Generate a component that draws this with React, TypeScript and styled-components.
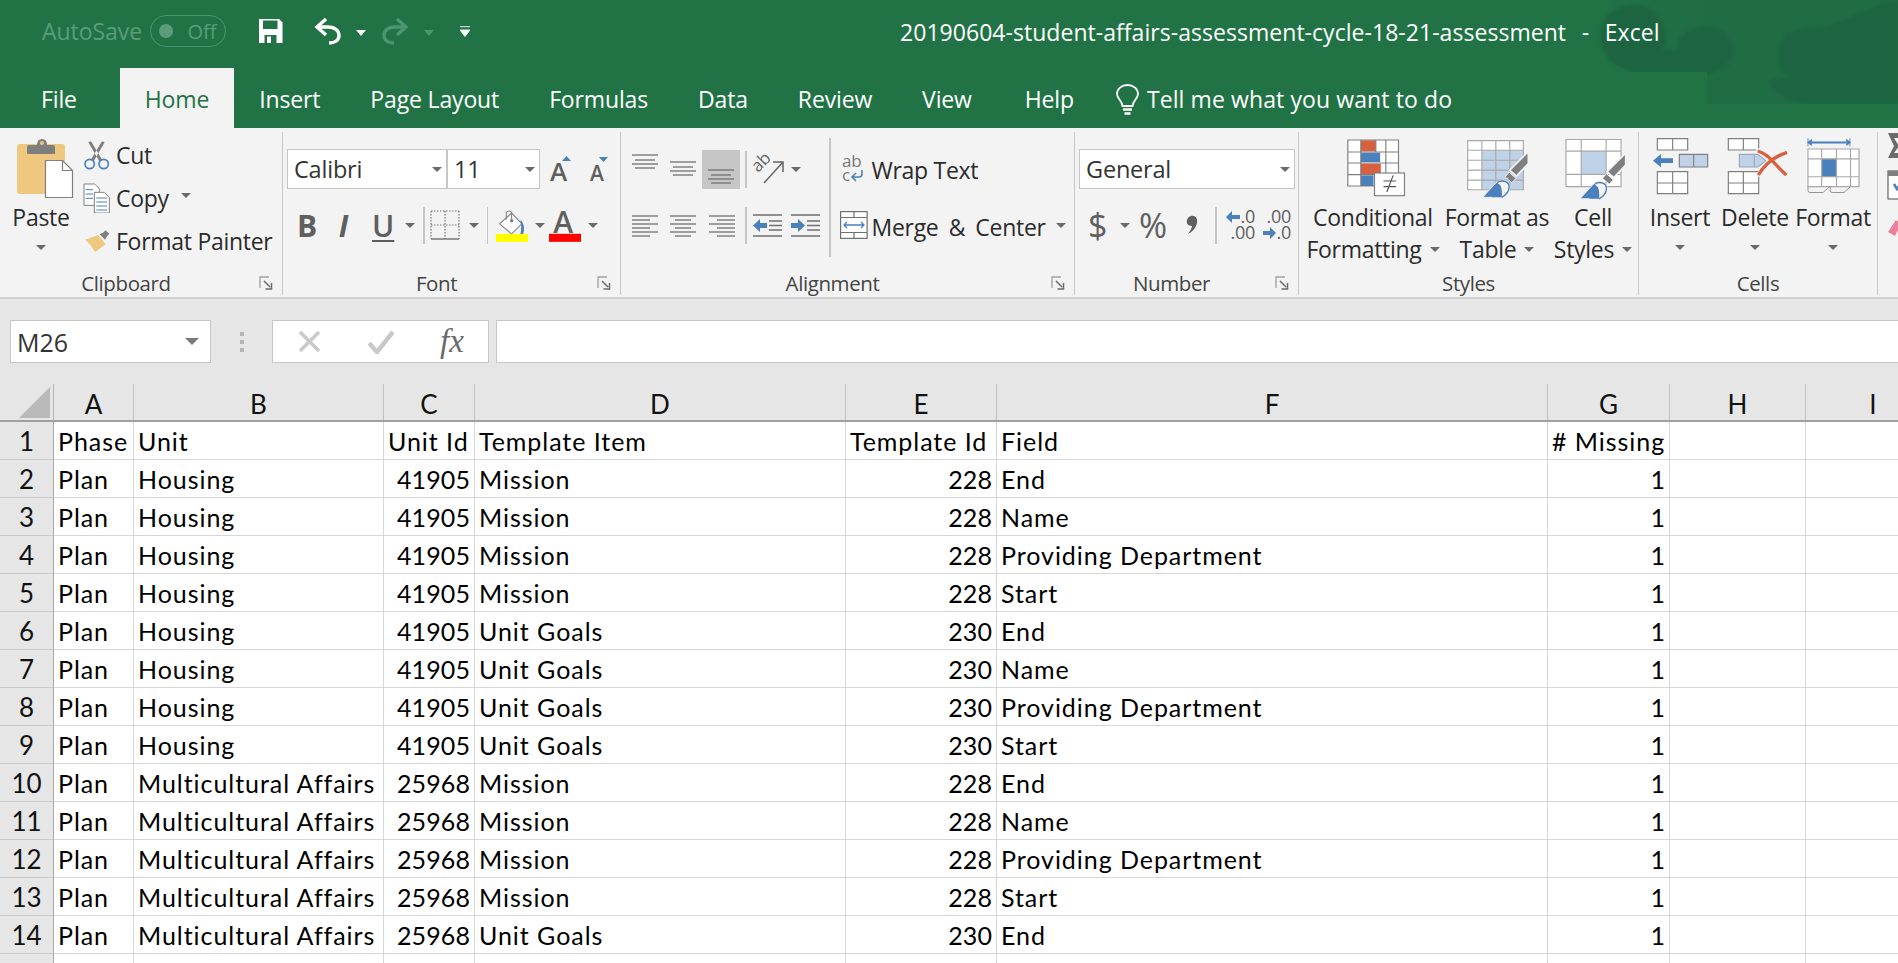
import React from 'react';
import styled, { createGlobalStyle } from 'styled-components';

const UI = `"Open Sans", "Noto Sans", "Liberation Sans", sans-serif`;
const CELL = `Lato, "Liberation Sans", sans-serif`;
const GREEN = '#217346';
const BLUE = '#4a80bc';
const PALE = '#c0d2e8';
const GREY = '#7f7f7f';
const LINE = '#c6c6c6';
const RED = '#d9603f';

const Global = createGlobalStyle`
    html, body { margin: 0; padding: 0; background: #fff; }
    body { font-family: ${UI}; }
`;

const Page = styled.div`
    width: 1898px;
    height: 963px;
    overflow: hidden;
    display: flex;
    flex-direction: column;
`;

/* title + tabs */
const Head = styled.header`
    position: relative;
    background: ${GREEN};
    height: 128px;
    flex: none;
    display: flex;
    flex-direction: column;
`;
const Texture = styled.svg`
    position: absolute;
    right: 0;
    top: 0;
`;
const TitleBar = styled.div`
    position: relative;
    height: 68px;
    display: flex;
    align-items: center;
    padding: 0 0 6px 42px;
    box-sizing: border-box;
`;
const AutoSave = styled.span`
    color: #5a9c7b;
    font-size: 23px;
    letter-spacing: -0.05px;
    width: 108px;
`;
const Toggle = styled.span`
    width: 76px;
    height: 32px;
    box-sizing: border-box;
    border: 1.5px solid #4d9470;
    border-radius: 16px;
    display: flex;
    align-items: center;
    color: #5a9c7b;
    font-size: 20px;
    padding-left: 7.5px;
    &::before {
        content: '';
        width: 14px;
        height: 14px;
        border-radius: 50%;
        background: #5a9c7b;
        margin-right: 15px;
    }
`;
const QatIcon = styled.svg<{ $ml: number }>`
    margin-left: ${p => p.$ml}px;
    flex: none;
`;
const QatCaret = styled.span<{ $ml: number; $dim?: boolean }>`
    margin-left: ${p => p.$ml}px;
    margin-top: 3px;
    border-left: 5px solid transparent;
    border-right: 5px solid transparent;
    border-top: 6px solid ${p => (p.$dim ? '#4d9470' : '#fff')};
`;
const DocTitle = styled.span`
    margin-left: 430px;
    padding-top: 2px;
    color: #fff;
    font-size: 23px;
    letter-spacing: 0.04px;
    word-spacing: 1.8px;
    white-space: pre;
`;
const TabBar = styled.nav`
    position: relative;
    height: 60px;
    display: flex;
    align-items: stretch;
    padding-left: 16px;
    font-size: 23px;
    letter-spacing: -0.15px;
`;
const Tab = styled.span<{ $active?: boolean; $mr?: number }>`
    padding: 2px 25px 0;
    margin-right: ${p => p.$mr ?? 0}px;
    display: flex;
    align-items: center;
    color: ${p => (p.$active ? GREEN : '#fff')};
    background: ${p => (p.$active ? '#f3f3f3' : 'transparent')};
`;
const TellMe = styled.span`
    display: flex;
    align-items: center;
    gap: 8px;
    color: #fff;
    margin-left: 17px;
    padding-top: 2px;
    letter-spacing: 0.1px;
`;

/* ribbon */
const Ribbon = styled.section`
    height: 171px;
    flex: none;
    box-sizing: border-box;
    background: #f3f3f3;
    border-bottom: 2px solid #d2d2d2;
    padding-top: 4px;
    display: flex;
    color: #2b2b2b;
    font-size: 23px;
    letter-spacing: -0.28px;
    overflow: hidden;
`;
const Group = styled.div<{ $w: number; $last?: boolean }>`
    position: relative;
    width: ${p => p.$w}px;
    flex: none;
    height: 163px;
    box-sizing: border-box;
    border-right: ${p => (p.$last ? 'none' : `1.5px solid ${LINE}`)};
    display: flex;
    flex-direction: column;
`;
const GroupBody = styled.div`
    flex: 1;
    display: flex;
    min-height: 0;
`;
const GroupLabel = styled.div<{ $launcher?: boolean }>`
    height: 24px;
    line-height: 24px;
    text-align: center;
    font-size: 20.5px;
    letter-spacing: -0.4px;
    color: #444;
    padding-right: ${p => (p.$launcher ? 30 : 0)}px;
`;
const Launcher = styled.svg`
    position: absolute;
    right: 9px;
    bottom: 5px;
`;
const Caret = styled.span<{ $ml?: number; $mt?: number }>`
    display: inline-block;
    flex: none;
    vertical-align: middle;
    margin-left: ${p => p.$ml ?? 0}px;
    margin-top: ${p => p.$mt ?? 0}px;
    border-left: 5px solid transparent;
    border-right: 5px solid transparent;
    border-top: 5.5px solid #6a6a6a;
`;
const PasteCol = styled.div`
    width: 82px;
    flex: none;
    display: flex;
    flex-direction: column;
    align-items: center;
    padding-top: 5px;
`;
const Big = styled.svg<{ $ml?: number }>`
    flex: none;
    overflow: visible;
    margin-left: ${p => p.$ml ?? 0}px;
`;
const PasteLabel = styled.span`
    height: 32px;
    line-height: 32px;
    margin-top: 2px;
`;
const ClipCol = styled.div`
    padding-top: 1px;
    display: flex;
    flex-direction: column;
`;
const ClipRow = styled.div`
    height: 43px;
    display: flex;
    align-items: center;
    white-space: nowrap;
`;
const ClipIcon = styled.svg`
    width: 30px;
    margin-right: 4px;
    flex: none;
`;
const Stack = styled.div<{ $w?: number }>`
    display: flex;
    flex-direction: column;
    gap: 16px;
    padding-top: 17px;
    ${p => (p.$w ? `width: ${p.$w}px; flex: none;` : '')}
`;
const Row = styled.div<{ $pl?: number }>`
    height: 40px;
    display: flex;
    align-items: center;
    padding-left: ${p => p.$pl ?? 0}px;
    white-space: nowrap;
`;
const Combo = styled.div<{ $w: number; $ml?: number }>`
    width: ${p => p.$w}px;
    height: 40px;
    margin-left: ${p => p.$ml ?? 0}px;
    box-sizing: border-box;
    flex: none;
    background: #fff;
    border: 1.5px solid ${LINE};
    display: flex;
    align-items: center;
    justify-content: space-between;
    padding: 0 4px 0 6px;
    font-size: 23.5px;
    letter-spacing: -0.2px;
    color: #333;
`;
const Glyph = styled.span<{ $w: number; $ml?: number; $size?: number; $weight?: number; $i?: boolean; $u?: boolean }>`
    width: ${p => p.$w}px;
    margin-left: ${p => p.$ml ?? 0}px;
    flex: none;
    text-align: center;
    font-family: ${UI};
    font-size: ${p => p.$size ?? 30}px;
    font-weight: ${p => p.$weight ?? 600};
    font-style: ${p => (p.$i ? 'italic' : 'normal')};
    color: #5f5f5f;
    letter-spacing: 0;
    text-decoration: ${p => (p.$u ? 'underline' : 'none')};
    text-decoration-thickness: 1.5px;
    text-underline-offset: 3px;
`;
const Sep = styled.span<{ $ml: number }>`
    width: 1.5px;
    height: 37px;
    flex: none;
    margin-left: ${p => p.$ml}px;
    background: ${LINE};
`;
const Small = styled.svg<{ $ml?: number }>`
    flex: none;
    overflow: visible;
    margin-left: ${p => p.$ml ?? 0}px;
`;
const Pressed = styled.span<{ $ml: number }>`
    width: 38px;
    height: 39px;
    margin-left: ${p => p.$ml}px;
    flex: none;
    background: #c6c6c6;
    display: flex;
    justify-content: center;
`;
const Divider = styled.span`
    width: 1.5px;
    height: 119px;
    margin-top: 6px;
    flex: none;
    background: ${LINE};
`;
const RowText = styled.span<{ $ml: number; $mt?: number; $ws?: number }>`
    margin-left: ${p => p.$ml}px;
    margin-top: ${p => p.$mt ?? 0}px;
    word-spacing: ${p => p.$ws ?? 0}px;
`;
const LargeRow = styled.div`
    display: flex;
    padding-left: 4px;
`;
const Large = styled.div<{ $w: number }>`
    width: ${p => p.$w}px;
    flex: none;
    display: flex;
    flex-direction: column;
    align-items: center;
    padding-top: 5px;
`;
const IconSlot = styled.div`
    height: 64px;
    display: flex;
    align-items: flex-start;
`;
const LargeText = styled.div`
    height: 32px;
    line-height: 32px;
    white-space: nowrap;
`;

/* formula band */
const Band = styled.section`
    height: 85px;
    flex: none;
    background: #e6e6e6;
    display: flex;
    padding: 21px 0 21px 10px;
    box-sizing: border-box;
`;
const NameBox = styled.div`
    width: 201px;
    box-sizing: border-box;
    background: #fff;
    border: 1.5px solid ${LINE};
    display: flex;
    align-items: center;
    justify-content: space-between;
    padding: 0 11px 0 6px;
    font-size: 25px;
    color: #333;
`;
const BandCaret = styled.span`
    border-left: 7px solid transparent;
    border-right: 7px solid transparent;
    border-top: 7px solid #7a7a7a;
`;
const Grip = styled.span`
    width: 61px;
    flex: none;
    display: flex;
    align-items: center;
    justify-content: center;
    &::before {
        content: '';
        width: 4px;
        height: 20px;
        background: repeating-linear-gradient(#b5b5b5 0 4px, transparent 4px 8px);
    }
`;
const FxBox = styled.div`
    width: 217px;
    box-sizing: border-box;
    background: #fff;
    border: 1.5px solid ${LINE};
    display: flex;
    align-items: center;
    padding-left: 25px;
`;
const CheckIcon = styled.svg`
    margin-left: 47px;
`;
const FxMark = styled.span`
    margin-left: 46px;
    font-family: "Liberation Serif", serif;
    font-style: italic;
    font-size: 33px;
    color: #6a6a6a;
`;
const FormulaInput = styled.div`
    flex: 1;
    margin-left: 7px;
    background: #fff;
    border: 1.5px solid ${LINE};
    border-right: none;
`;

/* sheet */
const COLUMNS = '54px 80px 250px 91px 371px 151px 551px 122px 136px 135px';
const HeaderRow = styled.div`
    display: grid;
    grid-template-columns: ${COLUMNS};
    height: 38px;
    flex: none;
    box-sizing: border-box;
    background: #e6e6e6;
    border-bottom: 2px solid #a0a0a0;
`;
const Corner = styled.div`
    border-right: 1.5px solid #b5b5b5;
    display: flex;
    align-items: center;
    justify-content: flex-end;
    padding-right: 3px;
`;
const ColHead = styled.div`
    border-right: 1.5px solid #c0c0c0;
    text-align: center;
    font-family: ${CELL};
    font-size: 26px;
    line-height: 41px;
    overflow: hidden;
    color: #111;
`;
const SheetRow = styled.div`
    display: grid;
    grid-template-columns: ${COLUMNS};
    height: 38px;
    flex: none;
    box-sizing: border-box;
`;
const RowHead = styled.div`
    background: #e6e6e6;
    border-right: 1.5px solid #a8a8a8;
    border-bottom: 1.5px solid #c8c8c8;
    text-align: center;
    font-family: ${CELL};
    font-size: 26px;
    line-height: 38px;
    overflow: hidden;
    color: #111;
`;
const Cell = styled.div<{ $num?: boolean }>`
    border-right: 1.5px solid #d6d6d6;
    border-bottom: 1.5px solid #d6d6d6;
    padding: 0 4px;
    overflow: hidden;
    white-space: nowrap;
    text-align: ${p => (p.$num ? 'right' : 'left')};
    font-family: ${CELL};
    font-size: 25px;
    letter-spacing: ${p => (p.$num ? 0.1 : 0.95)}px;
    line-height: 38.5px;
    color: #000;
`;

type Rec = [string, string, string, string];
const HOUSING = 'Housing';
const MULTI = 'Multicultural Affairs';
const rows: Rec[] = [
    [HOUSING, '41905', 'Mission', '228|End'],
    [HOUSING, '41905', 'Mission', '228|Name'],
    [HOUSING, '41905', 'Mission', '228|Providing Department'],
    [HOUSING, '41905', 'Mission', '228|Start'],
    [HOUSING, '41905', 'Unit Goals', '230|End'],
    [HOUSING, '41905', 'Unit Goals', '230|Name'],
    [HOUSING, '41905', 'Unit Goals', '230|Providing Department'],
    [HOUSING, '41905', 'Unit Goals', '230|Start'],
    [MULTI, '25968', 'Mission', '228|End'],
    [MULTI, '25968', 'Mission', '228|Name'],
    [MULTI, '25968', 'Mission', '228|Providing Department'],
    [MULTI, '25968', 'Mission', '228|Start'],
    [MULTI, '25968', 'Unit Goals', '230|End'],
];

const LauncherIcon = () => (
    <Launcher width="14" height="14" viewBox="0 0 14 14" fill="none">
        <path d="M10 1H1v11" stroke="#a0a0a0" strokeWidth="1.3" />
        <path d="M5 5l6 6M12.5 7v6h-6" stroke="#6a6a6a" strokeWidth="1.5" />
    </Launcher>
);

const Lines = ({ w, h, ml, ys }: { w: number; h: number; ml?: number; ys: [number, number, number][] }) => (
    <Small $ml={ml} width={w} height={h} viewBox={`0 0 ${w} ${h}`}>
        {ys.map(([a, b, y]) => (
            <line key={`${a}-${y}`} x1={a} x2={b} y1={y} y2={y} stroke="#707070" strokeWidth="1.3" />
        ))}
    </Small>
);

const Brush = ({ dx = 0, dy = 0 }: { dx?: number; dy?: number }) => (
    <g transform={`translate(${dx} ${dy})`}>
        <path d="M568 66v36l-36 38-20-18z" fill={GREY} stroke="#f3f3f3" strokeWidth="5" />
        <path d="M510 128l21 19-13 13-20-18z" fill={GREY} stroke="#f3f3f3" strokeWidth="3" />
        <path d="M430 204l40-44c14-12 38-10 42 8 2 14-6 28-22 36z" fill={BLUE} stroke="#f3f3f3" strokeWidth="3" />
        <path d="M476 158c16-8 34 0 34 14 0 12-8 24-22 32" fill="#f3f3f3" stroke={BLUE} strokeWidth="4" />
        <path d="M470 164c12-4 20 6 18 40h-30z" fill={BLUE} />
    </g>
);

const Cols = ['A', 'B', 'C', 'D', 'E', 'F', 'G', 'H', 'I'];

export default function App() {
    return (
        <Page>
            <Global />
            <Head>
                <Texture width="398" height="104" viewBox="0 0 398 104">
                    <defs>
                        <linearGradient id="fade" x1="90" x2="220" y1="0" y2="0" gradientUnits="userSpaceOnUse">
                            <stop offset="0" stopColor={GREEN} />
                            <stop offset="1" stopColor="#206c43" />
                        </linearGradient>
                        <clipPath id="zone">
                            <path d="M90 0h308v104H207V72H90z" />
                        </clipPath>
                        <filter id="soft">
                            <feGaussianBlur stdDeviation="1.5" />
                        </filter>
                    </defs>
                    <path d="M90 0h308v104H207V72H90z" fill="url(#fade)" />
                    <g clipPath="url(#zone)" filter="url(#soft)" fill="#1f6540">
                        <circle cx="133" cy="37" r="33" />
                        <ellipse cx="205" cy="50" rx="28" ry="24" />
                        <path d="M130 50h70v28h-70z" />
                        <path d="M278 60c-2-26 18-34 42-32 24-6 54-24 78-28v104h-90c-20-2-38-14-40-24 8-4 20 0 24-2-8-4-14-10-14-18z" />
                    </g>
                </Texture>
                <TitleBar>
                    <AutoSave>AutoSave</AutoSave>
                    <Toggle>Off</Toggle>
                    <QatIcon $ml={32} width="25" height="26" viewBox="0 0 25 26">
                        <path d="M1 1h20l3.5 3.5V25H1z" fill="#fff" />
                        <path d="M5 2.5h14.5V11H5zM6.5 17h12v8h-12z" fill={GREEN} />
                        <path d="M9 18.5h4V25H9z" fill="#fff" />
                    </QatIcon>
                    <QatIcon $ml={31} width="27" height="28" viewBox="0 0 27 28" fill="none" stroke="#fff" strokeWidth="3.4">
                        <path d="M12 2L3 10l9 8" />
                        <path d="M4 10h10c7 0 11 4 11 8.500S21 26 15 26" />
                    </QatIcon>
                    <QatCaret $ml={15} />
                    <QatIcon $ml={16} width="27" height="28" viewBox="0 0 27 28" fill="none" stroke="#4d9470" strokeWidth="3.4">
                        <path d="M15 2l9 8-9 8" />
                        <path d="M23 10H13C6 10 2 14 2 18.500S6 26 12 26" />
                    </QatIcon>
                    <QatCaret $ml={15} $dim />
                    <QatIcon $ml={26} width="10" height="11" viewBox="0 0 10 11">
                        <path d="M0 .7h10M0 4h10L5 10.500z" fill="#fff" stroke="#fff" strokeWidth=".9" />
                    </QatIcon>
                    <DocTitle>20190604-student-affairs-assessment-cycle-18-21-assessment  -  Excel</DocTitle>
                </TitleBar>
                <TabBar>
                    <Tab $mr={18}>File</Tab>
                    <Tab $active>Home</Tab>
                    <Tab>Insert</Tab>
                    <Tab>Page Layout</Tab>
                    <Tab>Formulas</Tab>
                    <Tab>Data</Tab>
                    <Tab>Review</Tab>
                    <Tab $mr={3}>View</Tab>
                    <Tab>Help</Tab>
                    <TellMe>
                        <svg width="23" height="31" viewBox="0 0 23 31" fill="none" stroke="#fff" strokeWidth="1.8">
                            <path d="M6.500 22c0-5-5.500-7-5.500-12C1 5 5.500 1 11.500 1S22 5 22 10c0 5-5.500 7-5.500 12z" />
                            <path d="M7 25.500h9M8.500 29.500h6" strokeWidth="2.400" />
                        </svg>
                        Tell me what you want to do
                    </TellMe>
                </TabBar>
            </Head>

            <Ribbon>
                <Group $w={283}>
                    <GroupBody>
                        <PasteCol>
                            <Big $ml={8} width="60" height="62" viewBox="0 0 60 62">
                                <rect x="2" y="7" width="48" height="50" rx="3" fill="#edc87e" />
                                <path d="M12 17v-7q0-2 2-2h8q0-6 5-6t5 6h6q2 0 2 2v7z" fill={GREY} />
                                <circle cx="27" cy="6" r="2" fill="#edc87e" />
                                <path d="M30.500 23.500h17l10 10v27h-27z" fill="#fff" stroke={GREY} strokeWidth="1.200" />
                                <path d="M47.500 23.500v10h10" fill="none" stroke={GREY} strokeWidth="1.200" />
                            </Big>
                            <PasteLabel>Paste</PasteLabel>
                            <Caret $mt={12} />
                        </PasteCol>
                        <ClipCol>
                            <ClipRow>
                                <ClipIcon height="30" viewBox="245 25 90 90">
                                    <path d="M264 32l8-3 34 56-9 4zM313 32l-8-3-34 56 9 4z" fill={GREY} />
                                    <circle cx="268" cy="97" r="14" fill="none" stroke={BLUE} strokeWidth="5" />
                                    <circle cx="310" cy="97" r="14" fill="none" stroke={BLUE} strokeWidth="5" />
                                </ClipIcon>
                                Cut
                            </ClipRow>
                            <ClipRow>
                                <ClipIcon height="30" viewBox="245 155 90 90">
                                    <path d="M251 158h32l14 14v50h-46z" fill="#fff" stroke={GREY} strokeWidth="3" />
                                    <path d="M256 175h22M256 188h22M256 201h22" stroke={BLUE} strokeWidth="3" />
                                    <path d="M282 183h30l15 15v47h-45z" fill="#fff" stroke={GREY} strokeWidth="3" />
                                    <path d="M288 200h32M288 212h32M288 224h32M288 236h32" stroke={BLUE} strokeWidth="3" />
                                </ClipIcon>
                                Copy
                                <Caret $ml={12} $mt={-4} />
                            </ClipRow>
                            <ClipRow>
                                <ClipIcon height="30" viewBox="245 285 90 90">
                                    <path d="M254 326l40-14 22 28-32 23c-6-12-18-28-30-37z" fill="#edc87e" />
                                    <path d="M298 310l12-6 5-6 12 10-6 6-7 12z" fill={GREY} />
                                </ClipIcon>
                                Format Painter
                            </ClipRow>
                        </ClipCol>
                    </GroupBody>
                    <GroupLabel $launcher>Clipboard</GroupLabel>
                    <LauncherIcon />
                </Group>

                <Group $w={338}>
                    <GroupBody>
                        <Stack>
                            <Row $pl={4}>
                                <Combo $w={160}>Calibri<Caret /></Combo>
                                <Combo $w={93}>11<Caret /></Combo>
                                <Small $ml={10} width="22" height="28" viewBox="0 0 22 28">
                                    <text x="0" y="26" fontFamily="Open Sans" fontWeight="600" fontSize="26" fill="#5f5f5f">A</text>
                                    <path d="M12 6l4.500-5 4.500 5z" fill={BLUE} />
                                </Small>
                                <Small $ml={18} width="20" height="28" viewBox="0 0 20 28">
                                    <text x="0" y="26" fontFamily="Open Sans" fontWeight="600" fontSize="21" fill="#5f5f5f">A</text>
                                    <path d="M9 2h9l-4.500 5z" fill={BLUE} />
                                </Small>
                            </Row>
                            <Row $pl={14}>
                                <Glyph $w={18} $weight={700}>B</Glyph>
                                <Glyph $w={17} $ml={20} $weight={700} $i>I</Glyph>
                                <Glyph $w={19} $ml={20} $u>U</Glyph>
                                <Caret $ml={14} />
                                <Sep $ml={8} />
                                <Small $ml={5} width="30" height="30" viewBox="0 0 30 30" fill="none">
                                    <path d="M1 1h28M1 15h28M1 1v28M15 1v28M29 1v28" stroke="#777" strokeWidth="1.200" strokeDasharray="1.500 1.500" />
                                    <path d="M1 29h28" stroke="#777" strokeWidth="1.500" />
                                </Small>
                                <Caret $ml={9} />
                                <Sep $ml={8} />
                                <Small $ml={7} width="34" height="33" viewBox="280 208 100 98">
                                    <path d="M293 252l36-32 30 32-30 30z" fill="#fff" stroke={GREY} strokeWidth="3" />
                                    <path d="M313 240v-22q8-8 16 0v26" fill="none" stroke={GREY} strokeWidth="3" />
                                    <circle cx="329" cy="243" r="5" fill={GREY} />
                                    <path d="M355 240c10 10 14 26 8 42h-8c4-14 2-28 0-42z" fill={BLUE} />
                                    <rect x="282" y="282" width="96" height="24" fill="#ff0" />
                                </Small>
                                <Caret $ml={6} />
                                <Small $ml={4} width="32" height="33" viewBox="447 208 96 98">
                                    <text x="460" y="281" fontFamily="Open Sans" fontWeight="600" fontSize="90" fill="#5f5f5f">A</text>
                                    <rect x="447" y="282" width="96" height="24" fill="#f00" />
                                </Small>
                                <Caret $ml={7} />
                            </Row>
                        </Stack>
                    </GroupBody>
                    <GroupLabel $launcher>Font</GroupLabel>
                    <LauncherIcon />
                </Group>

                <Group $w={454}>
                    <GroupBody>
                        <Stack $w={208}>
                            <Row $pl={11}>
                                <Lines w={26} h={40} ys={[[0, 26, 6], [3, 23, 11], [0, 26, 15], [3, 23, 19]]} />
                                <Lines w={26} h={40} ml={12} ys={[[0, 26, 13], [3, 23, 18], [0, 26, 22], [3, 23, 26]]} />
                                <Pressed $ml={6}>
                                    <Lines w={26} h={39} ys={[[0, 26, 20], [3, 23, 25], [0, 26, 29], [3, 23, 33]]} />
                                </Pressed>
                                <Sep $ml={5} />
                                <Small $ml={7} width="31" height="30" viewBox="0 0 31 30" fill="none">
                                    <text x="0" y="0" transform="translate(4 19) rotate(-45)" fontFamily="Open Sans" fontSize="17" fill="#666">ab</text>
                                    <path d="M10 29L29 8M19 8h10v10" stroke="#666" strokeWidth="1.500" />
                                </Small>
                                <Caret $ml={6} />
                            </Row>
                            <Row $pl={11}>
                                <Lines w={26} h={40} ys={[[0, 26, 11], [0, 18, 15], [0, 26, 19], [0, 18, 23], [0, 26, 27], [0, 18, 31]]} />
                                <Lines w={26} h={40} ml={12} ys={[[0, 26, 11], [5, 21, 15], [0, 26, 19], [5, 21, 23], [0, 26, 27], [5, 21, 31]]} />
                                <Lines w={26} h={40} ml={13} ys={[[0, 26, 11], [8, 26, 15], [0, 26, 19], [8, 26, 23], [0, 26, 27], [8, 26, 31]]} />
                                <Sep $ml={10} />
                                <Small $ml={6} width="29" height="30" viewBox="0 0 29 30">
                                    <path d="M0 5h29M0 26h29M16 11h13M16 15.500h13M16 20h13" stroke="#707070" strokeWidth="1.300" />
                                    <path d="M0 15.500l7-6.500v4h7v5H7v4z" fill={BLUE} />
                                </Small>
                                <Small $ml={9} width="29" height="30" viewBox="0 0 29 30">
                                    <path d="M0 5h29M0 26h29M16 11h13M16 15.500h13M16 20h13" stroke="#707070" strokeWidth="1.300" />
                                    <path d="M14 15.500L7 9v4H0v5h7v4z" fill={BLUE} />
                                </Small>
                            </Row>
                        </Stack>
                        <Divider />
                        <Stack>
                            <Row $pl={11}>
                                <Small width="22" height="28" viewBox="0 0 22 28" fill="none">
                                    <text x="0" y="12" fontFamily="Open Sans" fontSize="17" fill="#777">ab</text>
                                    <text x="0" y="26" fontFamily="Open Sans" fontSize="17" fill="#777">c</text>
                                    <path d="M20 15v4q0 3-3 3h-6M14 18l-4 4 4 4" stroke={BLUE} strokeWidth="1.600" />
                                </Small>
                                <RowText $ml={8} $mt={1}>Wrap Text</RowText>
                            </Row>
                            <Row $pl={9}>
                                <Small width="28" height="29" viewBox="0 0 28 29" fill="none">
                                    <rect x=".6" y=".6" width="26.500" height="26.800" fill="#fff" stroke="#707070" strokeWidth="1.200" />
                                    <path d="M1 6.500h26M1 21.500h26M14 1v5.500M14 21.500V27" stroke="#707070" strokeWidth="1.200" />
                                    <path d="M4 14h20M7 11l-3 3 3 3M21 11l3 3-3 3" stroke={BLUE} strokeWidth="1.300" />
                                </Small>
                                <RowText $ml={4} $mt={3} $ws={4.5}>Merge &amp; Center</RowText>
                                <Caret $ml={10} />
                            </Row>
                        </Stack>
                    </GroupBody>
                    <GroupLabel $launcher>Alignment</GroupLabel>
                    <LauncherIcon />
                </Group>

                <Group $w={224}>
                    <GroupBody>
                        <Stack>
                            <Row $pl={4}>
                                <Combo $w={216}>General<Caret /></Combo>
                            </Row>
                            <Row $pl={13}>
                                <Glyph $w={18} $size={34} $weight={500}>$</Glyph>
                                <Caret $ml={14} />
                                <Glyph $w={28} $ml={9} $size={34} $weight={500}>%</Glyph>
                                <Small $ml={19} width="12" height="20" viewBox="0 0 12 20">
                                    <path d="M5 1c4-1 7 2 6 7-1 5-5 9-9 11 2-3 4-6 4-8C2 11 0 8 1 5c.5-2 2-3.500 4-4z" fill="#5f5f5f" />
                                </Small>
                                <Sep $ml={17} />
                                <Small $ml={9} width="29" height="34" viewBox="0 0 29 34">
                                    <path d="M0 9l6-6v4h8v4H6v4z" fill={BLUE} />
                                    <text x="29" y="15" textAnchor="end" fontFamily="Open Sans" fontSize="18" fill="#5f5f5f">.0</text>
                                    <text x="29" y="31" textAnchor="end" fontFamily="Open Sans" fontSize="18" fill="#5f5f5f">.00</text>
                                </Small>
                                <Small $ml={8} width="28" height="34" viewBox="0 0 28 34">
                                    <text x="28" y="15" textAnchor="end" fontFamily="Open Sans" fontSize="18" fill="#5f5f5f">.00</text>
                                    <path d="M13 25l-6-6v4H0v4h7v4z" fill={BLUE} />
                                    <text x="28" y="31" textAnchor="end" fontFamily="Open Sans" fontSize="18" fill="#5f5f5f">.0</text>
                                </Small>
                            </Row>
                        </Stack>
                    </GroupBody>
                    <GroupLabel $launcher>Number</GroupLabel>
                    <LauncherIcon />
                </Group>

                <Group $w={340}>
                    <GroupBody>
                        <LargeRow>
                            <Large $w={140}>
                                <IconSlot>
                                    <Big $ml={6} width="62" height="61" viewBox="15 25 185 183">
                                        <rect x="23" y="34" width="152" height="138" fill="#fff" />
                                        <path d="M62 35h45v33H62z" fill={RED} />
                                        <path d="M62 72h58v28H62z" fill={BLUE} />
                                        <path d="M62 105h60v32H62z" fill={RED} />
                                        <path d="M62 140h38v32H62z" fill={BLUE} />
                                        <path d="M23 34h152v138H23zM62 34v138M107 34v36M137 34v138M23 70h152M23 103h152M23 138h152" fill="none" stroke={GREY} strokeWidth="3.500" />
                                        <rect x="103" y="133" width="90" height="68" fill="#fff" stroke={GREY} strokeWidth="3.500" />
                                        <path d="M130 157h38M130 174h38M140 190l19-50" stroke="#555" strokeWidth="3.500" />
                                    </Big>
                                </IconSlot>
                                <LargeText>Conditional</LargeText>
                                <LargeText>Formatting<Caret $ml={8} $mt={-5} /></LargeText>
                            </Large>
                            <Large $w={108}>
                                <IconSlot>
                                    <Big width="63" height="61" viewBox="380 22 190 184">
                                        <rect x="385" y="33" width="168" height="148" fill="#fff" />
                                        <rect x="428" y="62" width="125" height="119" fill={PALE} />
                                        <path d="M385 33h168v148H385zM428 33v148M470 33v148M512 33v148M385 62h168M385 92h168M385 122h168M385 152h168" fill="none" stroke="#a8a8a8" strokeWidth="3.500" />
                                        <Brush />
                                    </Big>
                                </IconSlot>
                                <LargeText>Format as</LargeText>
                                <LargeText>Table<Caret $ml={8} $mt={-5} /></LargeText>
                            </Large>
                            <Large $w={84}>
                                <IconSlot>
                                    <Big $ml={4} width="63" height="62" viewBox="670 18 190 186">
                                        <rect x="676" y="25" width="166" height="142" fill="#fff" />
                                        <rect x="722" y="60" width="75" height="70" fill={PALE} />
                                        <path d="M676 25h166v142H676zM722 25v142M797 25v142M676 60h166M676 130h166" fill="none" stroke="#a8a8a8" strokeWidth="3.500" />
                                        <Brush dx={288} dy={0} />
                                    </Big>
                                </IconSlot>
                                <LargeText>Cell</LargeText>
                                <LargeText>Styles<Caret $ml={8} $mt={-5} /></LargeText>
                            </Large>
                        </LargeRow>
                    </GroupBody>
                    <GroupLabel>Styles</GroupLabel>
                </Group>

                <Group $w={239}>
                    <GroupBody>
                        <LargeRow>
                            <Large $w={74}>
                                <IconSlot>
                                    <Big width="56" height="58" viewBox="30 20 168 174">
                                        <g fill="#fff" stroke={GREY} strokeWidth="3.500">
                                            <path d="M46 25h91v34H46zM92 25v34M46 124h91v66H46zM92 124v66M46 158h91" />
                                            <path d="M112 72h85v38h-85zM155 72v38" fill={PALE} />
                                        </g>
                                        <path d="M33 91l24-20v13h36v14H57v13z" fill={BLUE} />
                                    </Big>
                                </IconSlot>
                                <LargeText>Insert</LargeText>
                                <Caret $mt={12} />
                            </Large>
                            <Large $w={76}>
                                <IconSlot>
                                    <Big $ml={6} width="62" height="58" viewBox="258 20 186 174">
                                        <g fill="#fff" stroke={GREY} strokeWidth="3.500">
                                            <path d="M262 25h91v34h-91zM307 25v34M262 124h91v66h-91zM307 124v66M262 158h91" />
                                            <path d="M295 72h55l25 19-25 19h-55zM340 72v38" fill={PALE} stroke="#9aa8b8" />
                                        </g>
                                        <path d="M346 60c30 6 50 35 92 78M352 138c20-36 50-66 88-74" fill="none" stroke="#f3f3f3" strokeWidth="16" />
                                        <path d="M350 62c32 8 48 38 86 72M352 134c18-30 44-54 86-68" fill="none" stroke={RED} strokeWidth="10" />
                                    </Big>
                                </IconSlot>
                                <LargeText>Delete</LargeText>
                                <Caret $mt={12} />
                            </Large>
                            <Large $w={80}>
                                <IconSlot>
                                    <Big width="53" height="58" viewBox="497 20 162 174">
                                        <path d="M500 22v25M628 22v25" stroke={BLUE} strokeWidth="2.500" />
                                        <path d="M512 35h105" stroke={BLUE} strokeWidth="6" />
                                        <path d="M512 24v22l-15-11zM617 24v22l15-11z" fill={BLUE} />
                                        <rect x="500" y="55" width="156" height="115" fill="#fff" />
                                        <rect x="542" y="85" width="45" height="55" fill={BLUE} />
                                        <path d="M500 55h156v115H500zM542 55v115M587 55v115M630 55v115M500 85h156M500 140h156" fill="none" stroke="#a8a8a8" strokeWidth="3.500" />
                                        <path d="M500 170v12q0 6 6 6h40l20-18M568 170v12q0 6 6 6h36l20-18" fill="none" stroke={GREY} strokeWidth="2.500" />
                                    </Big>
                                </IconSlot>
                                <LargeText>Format</LargeText>
                                <Caret $mt={12} />
                            </Large>
                        </LargeRow>
                    </GroupBody>
                    <GroupLabel>Cells</GroupLabel>
                </Group>

                <Group $w={21} $last>
                    <Big $ml={10} width="11" height="110" viewBox="0 0 11 110">
                        <path d="M0 1h11v5H6l5 8-5 7h5v5H0l6-12z" fill="#6b6b6b" />
                        <rect x="0" y="39" width="11" height="28" fill="#fff" stroke="#666" strokeWidth="1.200" />
                        <rect x="0" y="39" width="11" height="5" fill={GREY} />
                        <path d="M6 52l3 5 3-4" fill="none" stroke={BLUE} strokeWidth="2.500" />
                        <path d="M0 100l8-12 5 4-6 12z" fill="#e8819a" />
                    </Big>
                </Group>
            </Ribbon>

            <Band>
                <NameBox>M26<BandCaret /></NameBox>
                <Grip />
                <FxBox>
                    <svg width="23" height="23" viewBox="0 0 23 23" fill="none" stroke="#c9c9c9" strokeWidth="3.600">
                        <path d="M2 2l19 19M21 2L2 21" />
                    </svg>
                    <CheckIcon width="26" height="24" viewBox="0 0 26 24" fill="none" stroke="#c9c9c9" strokeWidth="4.500">
                        <path d="M1 13l8 9L25 2" />
                    </CheckIcon>
                    <FxMark>fx</FxMark>
                </FxBox>
                <FormulaInput />
            </Band>

            <HeaderRow>
                <Corner>
                    <svg width="31" height="31" viewBox="0 0 31 31">
                        <path d="M31 0v31H0z" fill="#b9b9b9" />
                    </svg>
                </Corner>
                {Cols.map(c => (
                    <ColHead key={c}>{c}</ColHead>
                ))}
            </HeaderRow>
            <SheetRow>
                <RowHead>1</RowHead>
                <Cell>Phase</Cell>
                <Cell>Unit</Cell>
                <Cell>Unit Id</Cell>
                <Cell>Template Item</Cell>
                <Cell>Template Id</Cell>
                <Cell>Field</Cell>
                <Cell># Missing</Cell>
                <Cell />
                <Cell />
            </SheetRow>
            {rows.map(([unit, id, item, rest], i) => {
                const [tid, field] = rest.split('|');
                return (
                    <SheetRow key={i}>
                        <RowHead>{i + 2}</RowHead>
                        <Cell>Plan</Cell>
                        <Cell>{unit}</Cell>
                        <Cell $num>{id}</Cell>
                        <Cell>{item}</Cell>
                        <Cell $num>{tid}</Cell>
                        <Cell>{field}</Cell>
                        <Cell $num>1</Cell>
                        <Cell />
                        <Cell />
                    </SheetRow>
                );
            })}
            <SheetRow>
                <RowHead />
                {Cols.map(c => (
                    <Cell key={c} />
                ))}
            </SheetRow>
        </Page>
    );
}
